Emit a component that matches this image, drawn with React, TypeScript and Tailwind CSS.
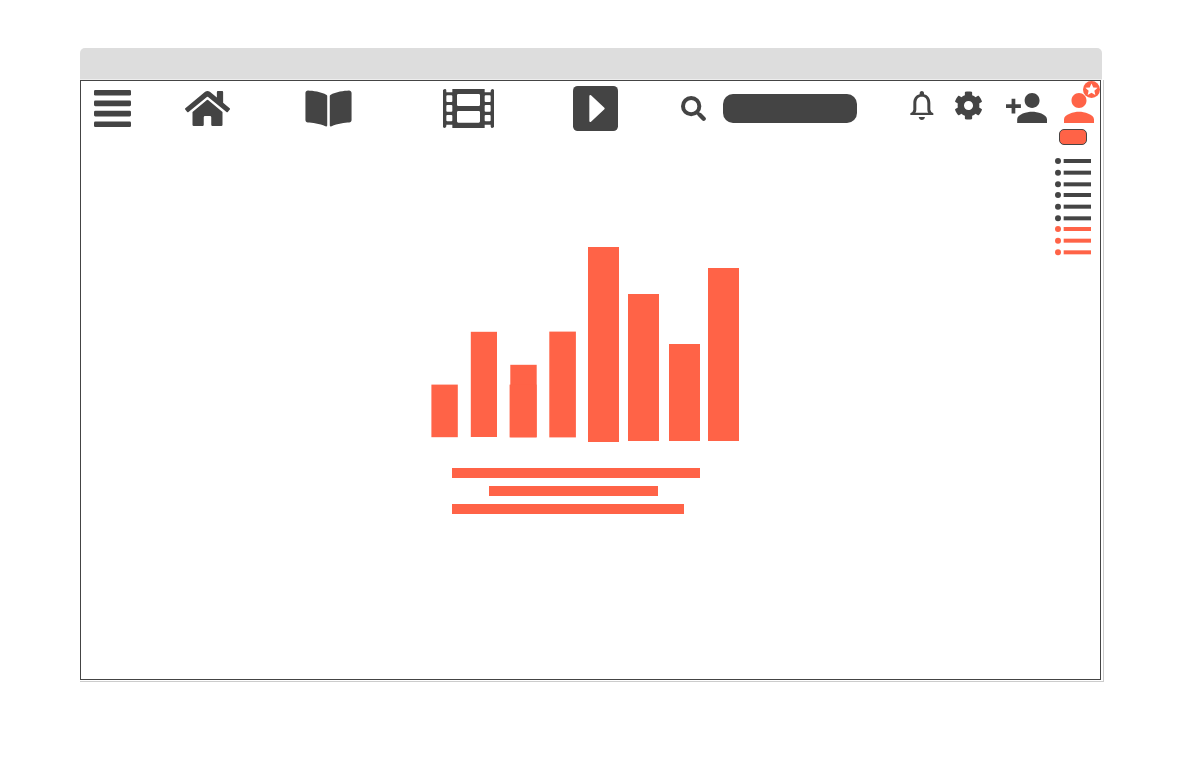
import type { ReactNode } from 'react';
import { FaBookOpen, FaCog, FaHome } from 'react-icons/fa';

const bars = [
  { x: 0.4, y: 137.6, w: 26.4, h: 52.6 },
  { x: 39.8, y: 84.8, w: 26.2, h: 105.2 },
  { x: 79.3, y: 117.8, w: 26.4, h: 72.4 },
  { x: 78.6, y: 137.6, w: 27, h: 52.8 },
  { x: 118.3, y: 84.6, w: 26.6, h: 105.8 },
  { x: 157, y: 0, w: 31, h: 195 },
  { x: 197, y: 47, w: 31, h: 147 },
  { x: 238, y: 97, w: 31, h: 97 },
  { x: 277, y: 21, w: 31, h: 173 },
];

function IconLink({ label, className, children }: { label: string; className: string; children: ReactNode }) {
  return (
    <a href="#" aria-label={label} className={`block shrink-0 ${className}`}>
      {children}
    </a>
  );
}

function MenuIcon() {
  return (
    <svg viewBox="0 0 112 112" className="size-[37px]" fill="currentColor">
      <rect x="0" y="0" width="112" height="17" rx="4" />
      <rect x="0" y="32" width="112" height="17" rx="4" />
      <rect x="0" y="63" width="112" height="17" rx="4" />
      <rect x="0" y="95" width="112" height="17" rx="4" />
    </svg>
  );
}

function FilmIcon() {
  return (
    <svg viewBox="0 0 153 117" className="h-[39px] w-[51px]" fill="currentColor">
      <path
        fillRule="evenodd"
        d="M0 4Q2 0 7 0Q10 1 10 5V10H28V0H125V10H143V5Q144 0 149 0Q153 1 153 4V113Q151 117 146 117Q143 116 143 112V107H125V117H28V107H10V112Q9 117 4 117Q0 116 0 113Z
        M13 19H25Q28 19 28 22V36Q28 39 25 39H13Q10 39 10 36V22Q10 19 13 19Z
        M13 48H25Q28 48 28 51V65Q28 68 25 68H13Q10 68 10 65V51Q10 48 13 48Z
        M13 78H25Q28 78 28 81V94Q28 97 25 97H13Q10 97 10 94V81Q10 78 13 78Z
        M128 19H140Q143 19 143 22V36Q143 39 140 39H128Q125 39 125 36V22Q125 19 128 19Z
        M128 48H140Q143 48 143 51V65Q143 68 140 68H128Q125 68 125 65V51Q125 48 128 48Z
        M128 78H140Q143 78 143 81V94Q143 97 140 97H128Q125 97 125 94V81Q125 78 128 78Z
        M46 15H107Q111 15 111 19V47Q111 51 107 51H46Q42 51 42 47V19Q42 15 46 15Z
        M46 66H107Q111 66 111 70V97Q111 101 107 101H46Q42 101 42 97V70Q42 66 46 66Z"
      />
    </svg>
  );
}

function PlayIcon() {
  return (
    <svg viewBox="0 0 135 135" className="size-[45px]">
      <rect width="135" height="135" rx="14" fill="currentColor" />
      <path d="M52 30L92 67.500L52 105Z" fill="white" stroke="white" strokeWidth="6" strokeLinejoin="round" />
    </svg>
  );
}

function SearchIcon() {
  return (
    <svg viewBox="0 0 75 75" className="size-[25px]" fill="none" stroke="currentColor">
      <circle cx="30.500" cy="30.500" r="24.500" strokeWidth="12" />
      <path d="M49 50L55 56" strokeWidth="10" />
      <path d="M57 57L68 68" strokeWidth="13" strokeLinecap="round" />
    </svg>
  );
}

function BellIcon() {
  return (
    <svg viewBox="0 0 72 87" className="h-[29px] w-6" fill="currentColor">
      <path
        fillRule="evenodd"
        d="M29 10V5Q30 0 35.500 0Q41 0 42 5V10C54 13 61 22 61 36V56Q62 64 70 67V72H1V67Q9 64 10 56V36C10 22 17 13 29 10ZM35.500 17C24 17 19 25 19 37V56Q19 62 16 65H55Q52 62 52 56V37C52 25 47 17 35.500 17Z"
      />
      <path d="M26 78H45Q43 87 35.500 87Q28 87 26 78Z" />
    </svg>
  );
}

function PersonAddIcon() {
  return (
    <svg viewBox="1 4 22 16" className="h-[30px] w-[41px]" fill="currentColor">
      <path d="M15 12c2.210 0 4-1.790 4-4s-1.790-4-4-4-4 1.790-4 4 1.790 4 4 4zM6 10V7H4v3H1v2h3v3h2v-3h3v-2H6zm9 4c-2.670 0-8 1.340-8 4v2h16v-2c0-2.660-5.330-4-8-4z" />
    </svg>
  );
}

function PersonIcon() {
  return (
    <svg viewBox="4 4 16 16" className="size-[30px]" fill="currentColor">
      <path d="M12 12c2.210 0 4-1.790 4-4s-1.790-4-4-4-4 1.790-4 4 1.790 4 4 4zm0 2c-2.670 0-8 1.340-8 4v2h16v-2c0-2.660-5.330-4-8-4z" />
    </svg>
  );
}

function StarBadge() {
  return (
    <svg viewBox="2 2 20 20" className="absolute -top-3 -right-1.5 size-[17px]" fill="currentColor">
      <circle cx="12" cy="12" r="10" />
      <path
        fill="white"
        d="M12 4.800L14.100 9.500L19.200 10L15.400 13.400L16.500 18.400L12 15.800L7.500 18.400L8.600 13.400L4.800 10L9.900 9.500Z"
      />
    </svg>
  );
}

function ListIcon() {
  return (
    <svg viewBox="0 0 108 90" className="h-[30px] w-9" fill="currentColor">
      <circle cx="9" cy="9" r="9" />
      <rect x="26" y="3" width="82" height="12" />
      <circle cx="9" cy="44" r="9" />
      <rect x="26" y="38" width="82" height="12" />
      <circle cx="9" cy="79" r="9" />
      <rect x="26" y="73" width="82" height="12" />
    </svg>
  );
}

export default function App() {
  return (
    <div className="min-h-screen bg-white pt-12 pr-[78px] pb-[78px] pl-20 font-['Liberation_Sans',sans-serif] text-[#444]">
      <div className="mr-0.5 h-8 rounded-t-[5px] border-b border-[#eee] bg-[#ddd]" />
      <div className="border-r border-b border-[#ccc] pr-0.5 pb-px">
        <div className="flex min-h-[600px] flex-col border border-[#444]">
          <header className="flex h-12 items-start">
            <button type="button" aria-label="Menu" className="mt-[9px] ml-[13px] shrink-0">
              <MenuIcon />
            </button>
            <nav className="flex items-start">
              <IconLink label="Home" className="mt-[7px] ml-[54px]">
                <FaHome className="h-[41px] w-[45px]" />
              </IconLink>
              <IconLink label="Library" className="mt-[7px] ml-[75px]">
                <FaBookOpen className="h-[41px] w-[47px]" />
              </IconLink>
              <IconLink label="Films" className="mt-2 ml-[91px]">
                <FilmIcon />
              </IconLink>
              <IconLink label="Play" className="mt-[5px] ml-[79px]">
                <PlayIcon />
              </IconLink>
            </nav>
            <form role="search" className="ml-[63px] flex items-start gap-[17px]">
              <label htmlFor="search" aria-label="Search" className="mt-[15px] shrink-0">
                <SearchIcon />
              </label>
              <input id="search" type="search" className="mt-[13px] h-[29px] w-[134px] rounded-[10px] bg-[#444] px-3 text-sm text-white" />
            </form>
            <div className="mr-1.5 ml-auto flex items-start">
              <button type="button" aria-label="Notifications" className="mt-2.5">
                <BellIcon />
              </button>
              <button type="button" aria-label="Settings" className="mt-2.5 ml-5">
                <FaCog className="size-[29px]" />
              </button>
              <button type="button" aria-label="Add person" className="mt-3 ml-[23px]">
                <PersonAddIcon />
              </button>
              <button type="button" aria-label="Profile" className="relative mt-3 ml-[17px] text-[#ff6347]">
                <PersonIcon />
                <StarBadge />
              </button>
            </div>
          </header>

          <div className="flex flex-1">
            <main className="flex flex-1 justify-center pt-[118px] pl-[34px]">
              <div>
                <svg viewBox="0 0 308 195" className="h-[195px] w-[308px]" fill="#ff6347" role="img" aria-label="Bar chart">
                  {bars.map((bar) => (
                    <rect key={bar.x} x={bar.x} y={bar.y} width={bar.w} height={bar.h} />
                  ))}
                </svg>
                <div className="mt-[26px] ml-[21px] flex flex-col gap-2">
                  <div className="h-2.5 w-[248px] bg-[#ff6347]" />
                  <div className="ml-[37px] h-2.5 w-[169px] bg-[#ff6347]" />
                  <div className="h-2.5 w-[232px] bg-[#ff6347]" />
                </div>
              </div>
            </main>
            <aside className="mr-[9px] flex w-9 flex-col items-start">
              <button type="button" aria-label="Account" className="ml-1 h-4 w-7 rounded-[5px] border border-[#444] bg-[#ff6347]" />
              <div className="mt-[13px] flex flex-col gap-1">
                <ListIcon />
                <ListIcon />
                <div className="text-[#ff6347]">
                  <ListIcon />
                </div>
              </div>
            </aside>
          </div>
        </div>
      </div>
    </div>
  );
}
